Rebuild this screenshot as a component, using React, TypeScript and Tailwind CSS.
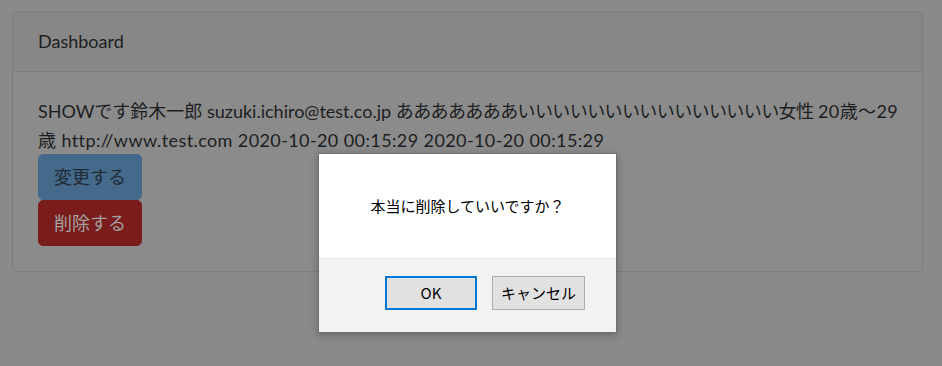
import React from "react";

const pageFont = { fontFamily: 'Lato, "Noto Sans CJK JP", sans-serif' };
const dialogFont = { fontFamily: '"Noto Sans CJK JP", "Liberation Sans", sans-serif' };

export default function App() {
  return (
    <div className="relative h-[366px] w-full overflow-hidden bg-[#898a8b]" style={pageFont}>
      <div className="ml-[12px] mt-[11px] w-[911px] rounded-[5px] border border-[#7d7d7d] bg-[#8b8b8b] text-[#1c1e21]">
        <div className="border-b border-[#7d7d7d] bg-[#878787] px-[25px] py-[15px] text-[18px] leading-[28.8px] rounded-t-[5px]">
          Dashboard
        </div>
        <div className="p-[25px] text-[18px] leading-[28.8px]">
          <div className="whitespace-nowrap">
            SHOWです鈴木一郎 suzuki.ichiro@test.co.jp{" "}
            <span className="tracking-[-0.6px]">あああああああいいいいいいいいいいいいいいい女性</span>{" "}
            <span className="tracking-[0.4px]">20歳～29</span>
          </div>
          <div className="whitespace-nowrap tracking-[0.4px]">
            歳 http://www.test.com 2020-10-20 00:15:29 2020-10-20 00:15:29
          </div>
          <div>
            <button className="rounded-[5px] border border-[#44698a] bg-[#44698a] px-[15px] py-[7.5px] text-[18px] leading-[28.8px] text-[#1f2b35]">
              変更する
            </button>
          </div>
          <div>
            <button className="rounded-[5px] border border-[#7a1c1c] bg-[#7a1c1c] px-[15px] py-[7.5px] text-[18px] leading-[28.8px] text-[#a3a3a3]">
              削除する
            </button>
          </div>
        </div>
      </div>

      <div
        className="absolute left-[318px] top-[153px] w-[299px] border border-[#6f6f6f] bg-white shadow-[0_2px_8px_rgba(0,0,0,0.25)]"
        style={dialogFont}
      >
        <div className="flex h-[104px] items-center justify-center text-[15px] text-black">
          本当に削除していいですか？
        </div>
        <div className="flex h-[74px] items-start justify-end gap-[15px] border-t border-[#e6e6e6] bg-[#f2f2f2] pr-[31px] pt-[17px]">
          <button className="h-[34px] w-[92px] border-2 border-[#0078d7] bg-[#e1e1e1] text-[15px] text-black">
            OK
          </button>
          <button className="h-[34px] w-[93px] border border-[#adadad] bg-[#e1e1e1] text-[15px] text-black">
            キャンセル
          </button>
        </div>
      </div>
    </div>
  );
}
